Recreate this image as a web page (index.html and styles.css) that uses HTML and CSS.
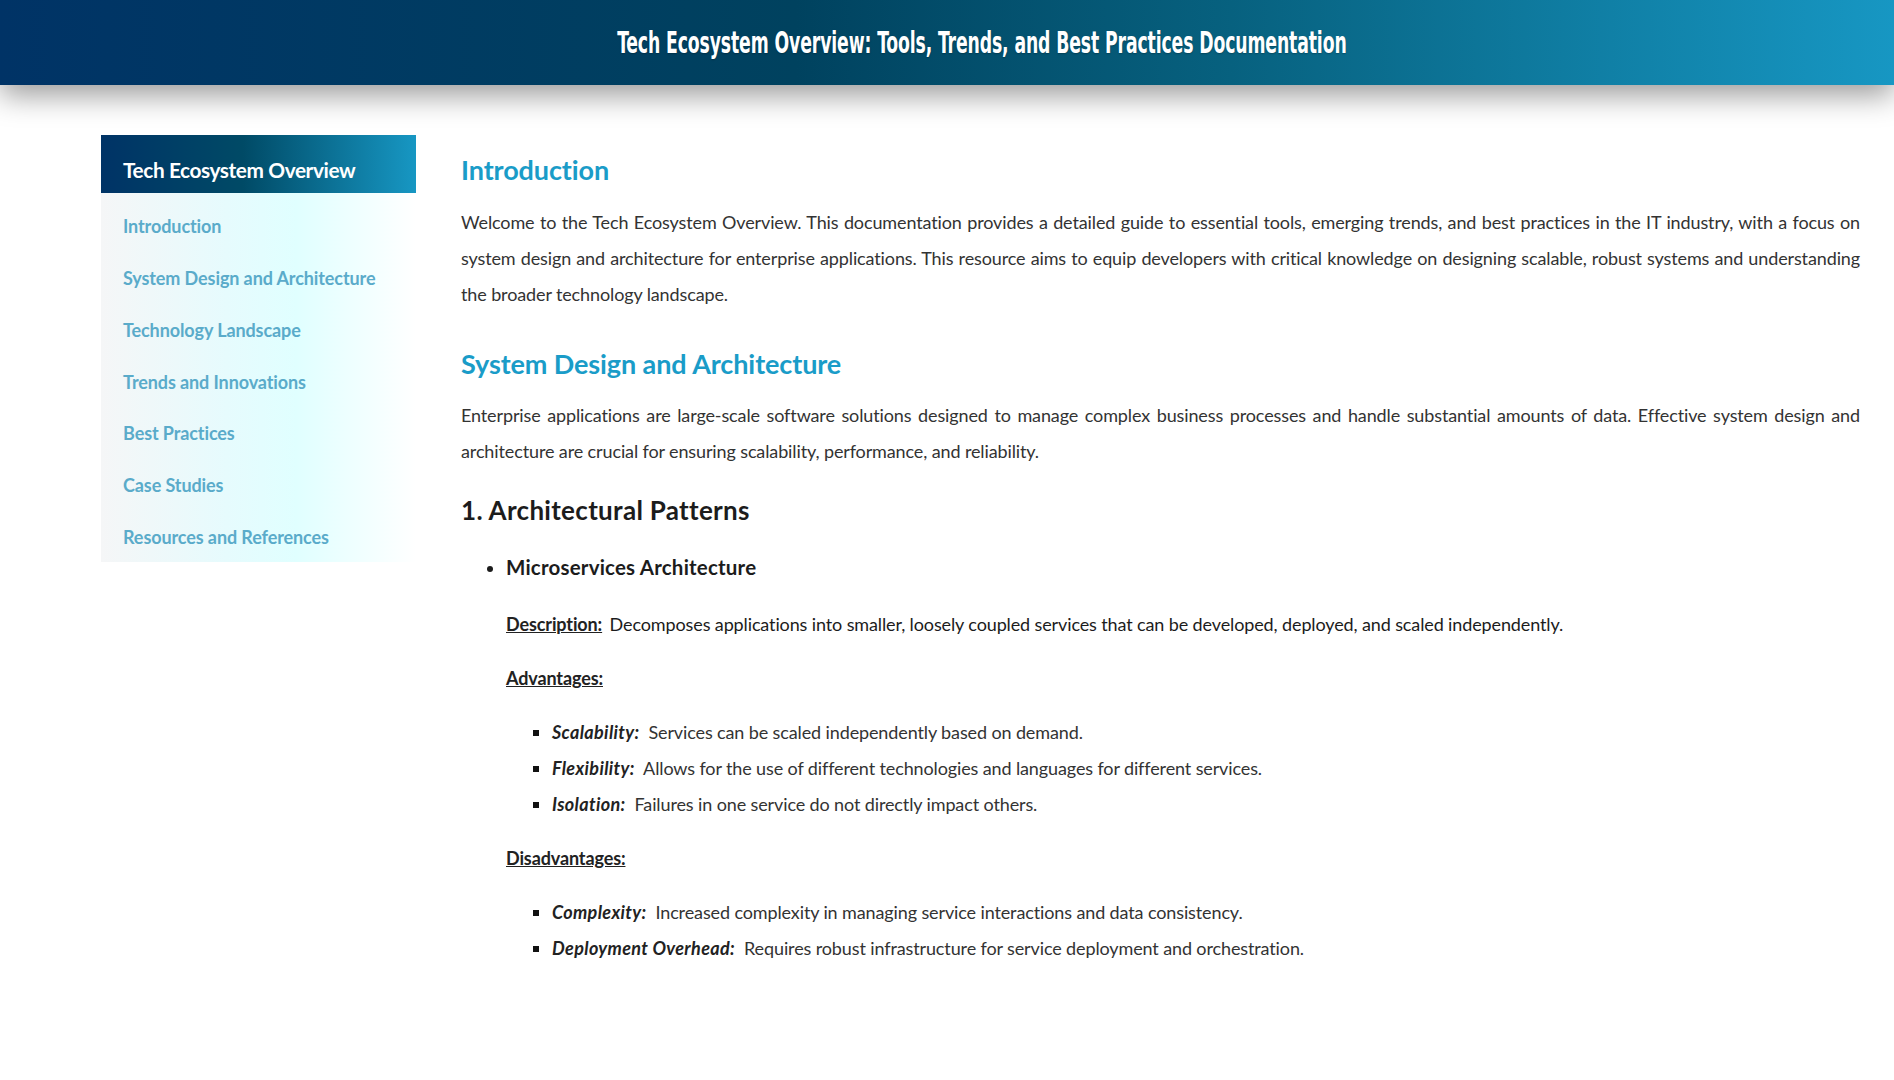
FILE: index.html
```html
<!DOCTYPE html>
<html lang="en">
<head>
<meta charset="utf-8">
<title>Tech Ecosystem Overview</title>
<link rel="stylesheet" href="styles.css">
</head>
<body>
<header class="top-bar">
  <h1 class="top-title"><span class="top-title-text">Tech Ecosystem Overview: Tools, Trends, and Best Practices Documentation</span></h1>
</header>
<div class="layout">
  <nav class="sidebar">
    <div class="sidebar-head">Tech Ecosystem Overview</div>
    <ul class="nav-list">
      <li><a class="nav-link" href="#introduction">Introduction</a></li>
      <li><a class="nav-link" href="#system-design">System Design and Architecture</a></li>
      <li><a class="nav-link" href="#technology">Technology Landscape</a></li>
      <li><a class="nav-link" href="#trends">Trends and Innovations</a></li>
      <li><a class="nav-link" href="#best-practices">Best Practices</a></li>
      <li><a class="nav-link" href="#case-studies">Case Studies</a></li>
      <li><a class="nav-link" href="#resources">Resources and References</a></li>
    </ul>
  </nav>
  <main class="content">
    <h2 class="section-title" id="introduction">Introduction</h2>
    <p class="text">Welcome to the Tech Ecosystem Overview. This documentation provides a detailed guide to essential tools, emerging trends, and best practices in the IT industry, with a focus on system design and architecture for enterprise applications. This resource aims to equip developers with critical knowledge on designing scalable, robust systems and understanding the broader technology landscape.</p>

    <h2 class="section-title" id="system-design">System Design and Architecture</h2>
    <p class="text">Enterprise applications are large-scale software solutions designed to manage complex business processes and handle substantial amounts of data. Effective system design and architecture are crucial for ensuring scalability, performance, and reliability.</p>

    <h3 class="sub-title">1. Architectural Patterns</h3>
    <ul class="pattern-list">
      <li class="pattern">
        <div class="pattern-name">Microservices Architecture</div>
        <p class="text"><strong class="label">Description:</strong> Decomposes applications into smaller, loosely coupled services that can be developed, deployed, and scaled independently.</p>
        <p class="text"><strong class="label">Advantages:</strong></p>
        <ul class="point-list">
          <li><strong class="point-label">Scalability:</strong> Services can be scaled independently based on demand.</li>
          <li><strong class="point-label">Flexibility:</strong> Allows for the use of different technologies and languages for different services.</li>
          <li><strong class="point-label">Isolation:</strong> Failures in one service do not directly impact others.</li>
        </ul>
        <p class="text"><strong class="label">Disadvantages:</strong></p>
        <ul class="point-list">
          <li><strong class="point-label">Complexity:</strong> Increased complexity in managing service interactions and data consistency.</li>
          <li><strong class="point-label">Deployment Overhead:</strong> Requires robust infrastructure for service deployment and orchestration.</li>
        </ul>
      </li>
    </ul>
  </main>
</div>
</body>
</html>
```
FILE: styles.css
```css
* { box-sizing: border-box; }

html, body {
  margin: 0;
  padding: 0;
  background: #ffffff;
}

body {
  font-family: Lato, "Open Sans", "Liberation Sans", sans-serif;
  font-size: 18px;
  line-height: 36px;
  letter-spacing: -0.12px;
  color: #333333;
}

.top-bar {
  height: 85px;
  display: flex;
  align-items: center;
  justify-content: center;
  padding-left: 70px;
  background: linear-gradient(90deg, #003366 0%, #00425f 42%, #07617f 65%, #1797c3 100%);
  box-shadow: 0 10px 30px rgba(0, 0, 0, 0.4);
  position: relative;
  z-index: 2;
}

.top-title {
  margin: 0;
  font-family: "Liberation Sans Narrow", "DejaVu Sans Condensed", "Liberation Sans", sans-serif;
  font-weight: 700;
  font-size: 30px;
  line-height: 36px;
  color: #ffffff;
  white-space: nowrap;
  letter-spacing: 0;
  text-shadow: 0 1px 2px rgba(0, 0, 0, 0.25);
}

.top-title-text {
  display: inline-block;
  transform: scaleX(0.64);
  letter-spacing: -0.2px;
}

.layout {
  display: flex;
  align-items: flex-start;
  gap: 45px;
  padding: 50px 34px 60px 101px;
}

.sidebar {
  flex: 0 0 315px;
  background: linear-gradient(90deg, #f5f6f7 0%, #e6fbfd 40%, #e0ffff 62%, #ffffff 100%);
}

.sidebar-head {
  height: 58px;
  padding: 22px 22px 0 22px;
  font-size: 20.8px;
  line-height: 25px;
  font-weight: 700;
  color: #ffffff;
  letter-spacing: -0.4px;
  background: linear-gradient(90deg, #003366 0%, #004a66 45%, #1797c3 100%);
}

.nav-list {
  list-style: none;
  margin: 0;
  padding: 7.6px 0 0 0;
}

.nav-link {
  display: block;
  padding: 14.85px 23px 14.85px 22px;
  font-size: 18px;
  line-height: 22px;
  font-weight: 700;
  color: #5aabca;
  text-decoration: none;
  letter-spacing: -0.1px;
}

.content {
  flex: 1 1 auto;
  min-width: 0;
}

.section-title {
  margin: 35px 0 17px 0;
  font-size: 27px;
  line-height: 33.6px;
  font-weight: 700;
  color: #1a9cc8;
  letter-spacing: -0.1px;
}

.section-title:first-child {
  margin-top: 18px;
}

.text {
  margin: 0 0 18px 0;
  text-align: justify;
}

.sub-title {
  margin: 26px 0 24px 0;
  font-size: 26px;
  line-height: 30px;
  font-weight: 700;
  color: #1c1c1c;
  letter-spacing: 0.3px;
}

.pattern-list {
  margin: 0;
  padding-left: 45px;
  list-style: disc;
  color: #1c1c1c;
}

.pattern-name {
  font-size: 20.5px;
  font-weight: 700;
  color: #1c1c1c;
  margin-bottom: 21px;
  letter-spacing: 0.2px;
}

.label {
  font-weight: 700;
  color: #222222;
  text-decoration: underline;
  margin-right: 3px;
}

.point-list {
  margin: 18px 0 18px 0;
  padding-left: 46px;
  list-style: square;
  color: #333333;
}

.point-list li::marker {
  color: #111111;
}

.point-label {
  font-weight: 700;
  font-style: italic;
  color: #222222;
  margin-right: 4.5px;
  letter-spacing: 0.35px;
}
```
